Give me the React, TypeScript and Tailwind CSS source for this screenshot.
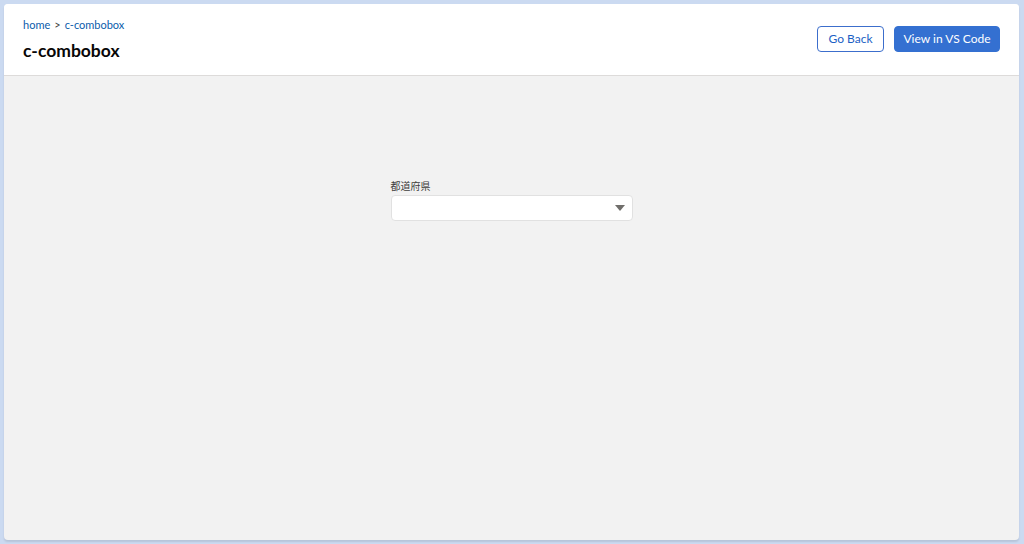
export default function App() {
  return (
    <div
      className="flex h-[544px] w-[1024px] bg-[#cbdaf1] p-1"
      style={{ fontFamily: "Lato, 'Noto Sans CJK JP', sans-serif" }}
    >
      <div className="flex w-[1015px] h-[536px] flex-col overflow-hidden rounded-[4px] bg-[#f2f2f2] shadow-[0_2px_2px_rgba(0,0,0,0.1)]">
        <header className="flex h-[72px] shrink-0 items-start justify-between border-b border-[#dddbda] bg-white pl-[19px] pr-[19px]">
          <div className="pt-[13px]">
            <nav className="flex items-center gap-[4px] text-[11px] text-[#0b5cab]">
              <span>home</span>
              <span className="text-[#3e3e3c]">&gt;</span>
              <span>c-combobox</span>
            </nav>
            <h1 className="mt-[5px] text-[17.5px] font-bold leading-[24px] text-[#080707]">c-combobox</h1>
          </div>
          <div className="flex gap-[10px] pt-[22px]">
            <button className="flex h-[26px] w-[67px] items-center justify-center rounded-[4px] border border-[#3c6ecc] bg-white text-[12px] text-[#1c5fc4]">
              Go Back
            </button>
            <button className="flex h-[26px] w-[106px] items-center justify-center rounded-[4px] border border-[#3470d1] bg-[#3470d1] text-[12px] text-white">
              View in VS Code
            </button>
          </div>
        </header>
        <main className="flex flex-1 justify-center pt-[104px]">
          <div className="w-[242px]">
            <label className="block text-[10px] leading-[13px] text-[#3e3e3c]">都道府県</label>
            <div className="mt-[2px] flex h-[26px] items-center justify-end rounded-[4px] border border-[#e1e1e1] bg-white pr-[7px]">
              <svg width="10" height="6" viewBox="0 0 10 6">
                <path d="M0 0 L10 0 L5 6 Z" fill="#706e6b" />
              </svg>
            </div>
          </div>
        </main>
      </div>
    </div>
  );
}
